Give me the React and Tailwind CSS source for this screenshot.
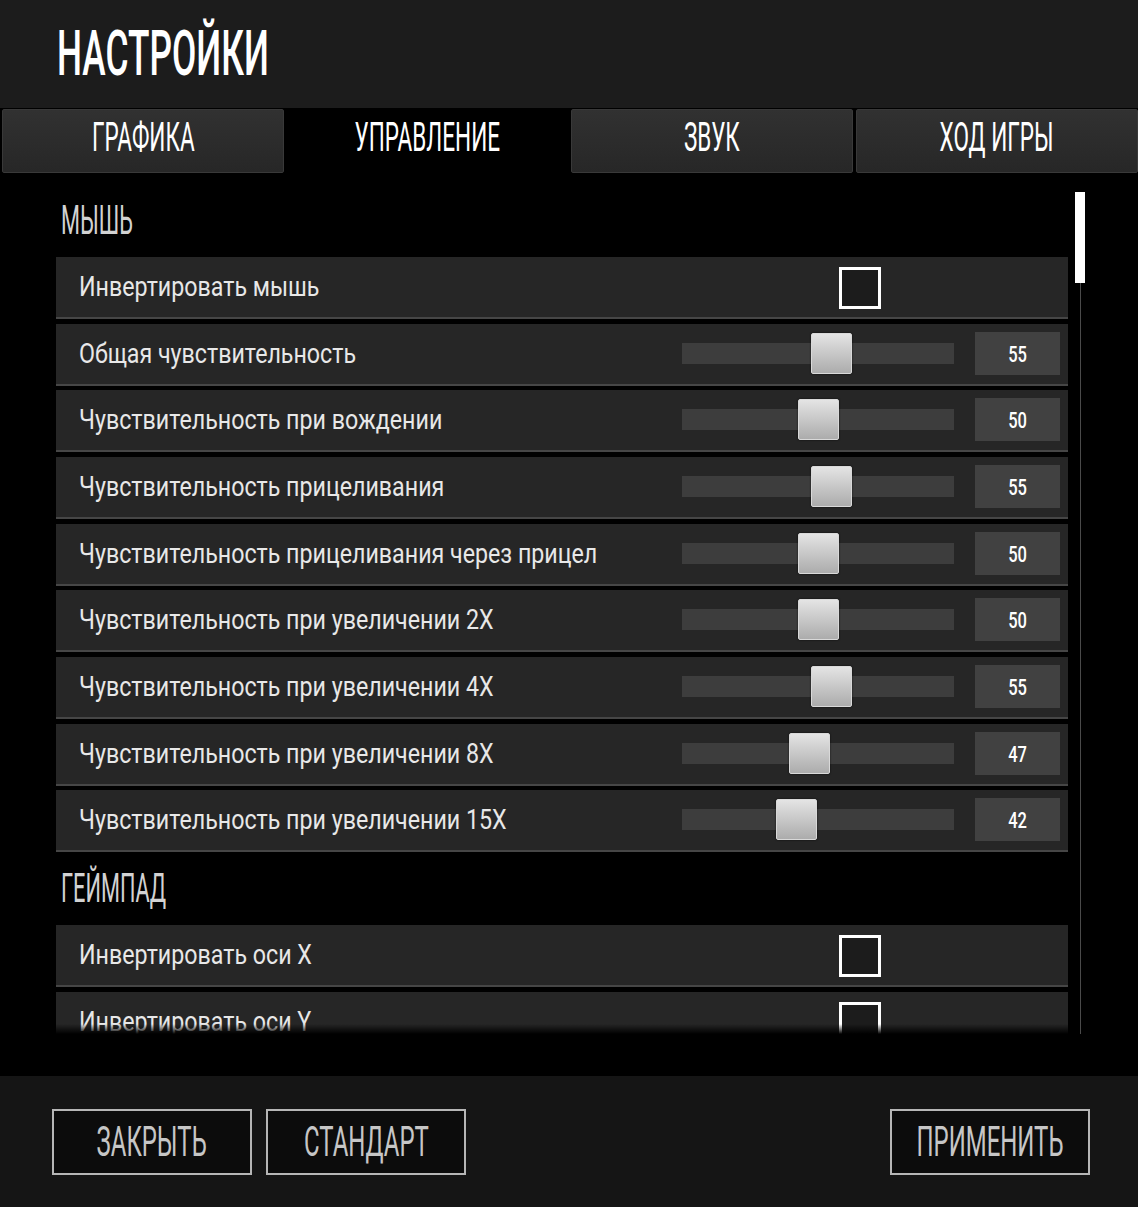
import React from "react";

const TABS = [
  { label: "ГРАФИКА", active: false },
  { label: "УПРАВЛЕНИЕ", active: true },
  { label: "ЗВУК", active: false },
  { label: "ХОД ИГРЫ", active: false },
];

const MOUSE_SLIDERS = [
  { label: "Общая чувствительность", value: 55 },
  { label: "Чувствительность при вождении", value: 50 },
  { label: "Чувствительность прицеливания", value: 55 },
  { label: "Чувствительность прицеливания через прицел", value: 50 },
  { label: "Чувствительность при увеличении 2X", value: 50 },
  { label: "Чувствительность при увеличении 4X", value: 55 },
  { label: "Чувствительность при увеличении 8X", value: 47 },
  { label: "Чувствительность при увеличении 15X", value: 42 },
];

function SectionTitle({ children, className = "" }) {
  return (
    <div className={"h-[41px] pl-[5px] mb-[16px] " + className}>
      <span className="inline-block origin-left scale-x-[0.53] text-[41px] leading-[41px] font-normal text-[#d2d2d2] whitespace-nowrap">
        {children}
      </span>
    </div>
  );
}

function Row({ label, children }) {
  return (
    <div className="relative h-[62px] w-[1012px] shrink-0 bg-[#262626] border-b-2 border-[#464646] flex items-center pl-[23px]">
      <span className="inline-block origin-left scale-x-[0.86] text-[27px] leading-[32px] text-[#e8e8e8] whitespace-nowrap">
        {label}
      </span>
      {children}
    </div>
  );
}

function Checkbox() {
  return (
    <div className="absolute left-[783px] top-[10px] w-[42px] h-[42px] border-[3px] border-white bg-[#1c1c1c]" />
  );
}

function Slider({ value }) {
  const left = Math.round(2.69 * value - 19);
  return (
    <>
      <div className="absolute left-[626px] top-[19px] w-[272px] h-[21px] bg-[#3d3d3d]">
        <div
          className="absolute top-[-10px] w-[41px] h-[41px] rounded-[2px] border border-[#d9d9d9] bg-linear-to-b from-[#e4e4e4] to-[#acacac] shadow-[0_0_2px_rgba(0,0,0,0.8)]"
          style={{ left }}
        />
      </div>
      <div className="absolute left-[919px] top-[8px] w-[85px] h-[43px] bg-[#414141] flex items-center justify-center pt-[3px]">
        <span className="inline-block scale-x-[0.75] text-[22px] leading-[26px] font-medium text-white">
          {value}
        </span>
      </div>
    </>
  );
}

function FooterButton({ children, className = "" }) {
  return (
    <button
      className={
        "w-[200px] h-[66px] border-2 border-[#b6b6b6] bg-[#0c0c0c] flex items-center justify-center " +
        className
      }
    >
      <span className="inline-block scale-x-[0.57] text-[42px] leading-[42px] font-normal text-[#c6c6c6] whitespace-nowrap">
        {children}
      </span>
    </button>
  );
}

export default function App() {
  return (
    <div className="w-[1138px] h-[1207px] bg-black flex flex-col overflow-hidden font-['Roboto',sans-serif]">
      {/* header */}
      <div className="h-[108px] shrink-0 bg-[#1c1c1c] pt-[22px] pl-[57px]">
        <span className="inline-block origin-left scale-x-[0.56] text-[63px] leading-[63px] font-medium text-white whitespace-nowrap">
          НАСТРОЙКИ
        </span>
      </div>

      {/* tabs */}
      <div className="h-[66px] shrink-0 flex gap-[3px] pl-[2px] py-[1px] bg-black">
        {TABS.map((t) => (
          <div
            key={t.label}
            className={
              "flex-1 flex items-center justify-center pb-[7px] rounded-[2px] " +
              (t.active
                ? "bg-black"
                : "bg-linear-to-b from-[#313131] to-[#272727] border border-[#393939]")
            }
          >
            <span className="inline-block scale-x-[0.55] text-[41px] leading-[41px] font-normal text-white whitespace-nowrap">
              {t.label}
            </span>
          </div>
        ))}
      </div>

      {/* settings list */}
      <div className="h-[902px] shrink-0 flex">
        <div className="relative w-[1068px] h-[860px] overflow-hidden">
          <div className="pt-[26px] pl-[56px] flex flex-col">
            <SectionTitle>МЫШЬ</SectionTitle>
            <div className="flex flex-col gap-[4.67px]">
              <Row label="Инвертировать мышь">
                <Checkbox />
              </Row>
              {MOUSE_SLIDERS.map((s) => (
                <Row key={s.label} label={s.label}>
                  <Slider value={s.value} />
                </Row>
              ))}
            </div>
            <SectionTitle className="mt-[16px]">ГЕЙМПАД</SectionTitle>
            <div className="flex flex-col gap-[4.67px]">
              <Row label="Инвертировать оси X">
                <Checkbox />
              </Row>
              <Row label="Инвертировать оси Y">
                <Checkbox />
              </Row>
            </div>
          </div>
          <div className="absolute left-0 right-0 bottom-0 h-[10px] bg-linear-to-b from-transparent to-black" />
        </div>

        {/* scrollbar */}
        <div className="w-[20px] h-[860px] pl-[7px] pt-[18px] flex flex-col">
          <div className="w-[10px] h-[91px] bg-white" />
          <div className="ml-[5px] w-px flex-1 bg-[#4a4a4a]" />
        </div>
      </div>

      {/* footer */}
      <div className="flex-1 bg-[#151515] flex items-start pt-[33px] pl-[52px] pr-[48px]">
        <FooterButton>ЗАКРЫТЬ</FooterButton>
        <FooterButton className="ml-[14px]">СТАНДАРТ</FooterButton>
        <FooterButton className="ml-auto">ПРИМЕНИТЬ</FooterButton>
      </div>
    </div>
  );
}
